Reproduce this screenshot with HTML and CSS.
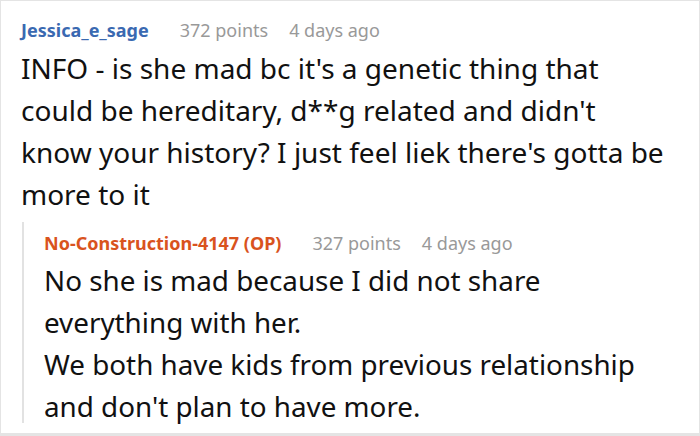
FILE: index.html
```html
<!DOCTYPE html>
<html>
<head>
<meta charset="utf-8">
<link rel="stylesheet" href="styles.css">
</head>
<body>
<div class="thread">
  <div class="comment">
    <div class="meta">
      <span class="author author-blue">Jessica_e_sage</span>
      <span class="points">372 points</span>
      <span class="time">4 days ago</span>
    </div>
    <p class="text">INFO - is she mad bc it's a genetic thing that could be hereditary, d**g related and didn't know your history? I just feel liek there's gotta be more to it</p>
  </div>
  <div class="reply">
    <div class="meta">
      <span class="author author-op">No-Construction-4147 (OP)</span>
      <span class="points">327 points</span>
      <span class="time">4 days ago</span>
    </div>
    <p class="text">No she is mad because I did not share everything with her.<br>We both have kids from previous relationship and don't plan to have more.</p>
  </div>
</div>
</body>
</html>
```

FILE: styles.css
```css
html, body {
  margin: 0;
  padding: 0;
  background: #fff;
}
.thread {
  box-sizing: border-box;
  width: 700px;
  height: 436px;
  overflow: hidden;
  border: 1px solid #e4e4e4;
  border-bottom-width: 3px;
  padding: 17px 20px 0 20px;
  font-family: "Noto Sans", "Open Sans", sans-serif;
}
.meta {
  display: flex;
  align-items: baseline;
  font-size: 18px;
  line-height: 24px;
  color: #999;
}
.author {
  font-weight: bold;
  margin-right: 31px;
}
.author-blue { color: #3a69b1; }
.author-op { color: #d9531e; }
.points { margin-right: 21px; }
.text {
  margin: 5px 0 0 0;
  font-size: 28px;
  line-height: 42px;
  color: #111;
  max-width: 645px;
}
.reply {
  margin-top: 7px;
  margin-left: 1px;
  height: 192px;
  border-left: 2px solid #e2e2e2;
  padding: 9px 0 0 20px;
}
.reply .text {
  max-width: 610px;
  margin-top: 4px;
  font-size: 27.8px;
}
```
